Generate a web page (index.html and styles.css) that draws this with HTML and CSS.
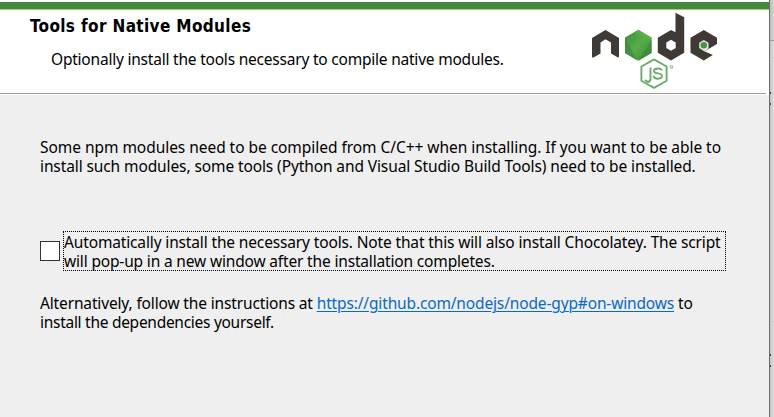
FILE: index.html
```html
<!DOCTYPE html>
<html lang="en">
<head>
<meta charset="utf-8">
<title>Tools for Native Modules</title>
<link rel="stylesheet" href="styles.css">
</head>
<body>
<div class="screen">
  <main class="dialog">
    <header class="header">
      <div class="heading">
        <h1 class="title">Tools for Native Modules</h1>
        <p class="subtitle">Optionally install the tools necessary to compile native modules.</p>
      </div>
      <svg class="logo" viewBox="590 11 130 80" width="130" height="80" aria-label="node js">
        <defs>
          <linearGradient id="leaf" x1="0" y1="0" x2="1" y2="1">
            <stop offset="0" stop-color="#3f8b3c"/><stop offset=".5" stop-color="#57ad49"/><stop offset="1" stop-color="#3f873b"/>
          </linearGradient>
        </defs>
        <g fill="#403a37">
          <path d="M592 38 L605.5 30 L619 38 V56.5 Q619 58 617.5 57.2 L611 53.5 V42.5 L605.5 39.3 L600.5 42.5 V53.5 L593.5 57.5 Q592 58 592 56.5Z"/>
          <path fill-rule="evenodd" d="M675.5 12.8 L684.2 17.3 V52.8 L671 60.5 L657.8 52.8 V37.8 L671 30 L675.5 32.2Z M671 39.8 L666.3 42.5 V48 L671 50.8 L675.7 48 V42.5Z"/>
          <path d="M703.8 30 L717 37.8 V44 L708.5 49 L705 51.5 L712.8 55 L703.8 60.5 L690.5 52.8 V37.8Z"/>
        </g>
        <path d="M703.8 40 L708.5 42.7 V48.5 L705 51.8 L699.2 48 V42.7Z" fill="#dfebde"/>
        <circle cx="703.8" cy="45.2" r="3.2" fill="#479346"/>
        <path d="M638.3 29.8 L651.6 37.5 V53 L638.3 60.8 L625 53 V37.5Z" fill="url(#leaf)"/>
        <path d="M625 37.5 L637 60.2 L625 53Z" fill="#468f42"/>
        <path d="M634 32.3 L638.3 29.8 L651.6 37.5 V41Z" fill="#60b54c" opacity=".6"/>
        <path d="M651.6 40 V53 L638.3 60.8Z" fill="#388439" opacity=".55"/>
        <g fill="none" stroke="#6aac69">
          <path stroke-width="1.9" stroke-linejoin="round" d="M648 83 V81 M650 85.7 L641.4 80.7 V66.5 L654 59.4 L666.6 66.5 V80.7 L654 87.9 L650 85.7"/>
          <path stroke-width="1.9" d="M650.5 67.5 V79 Q650.5 81.3 648.2 82 L644.8 80.2 M662 70.3 Q660.8 68.5 658 68.5 Q654 68.5 654 71 Q654 73 658 73.4 Q662 73.8 662 76.1 Q662 78.7 658 78.7 Q654 78.7 653.4 75.8"/>
          <circle cx="671.5" cy="66.8" r="1.3" stroke-width="1.1" opacity=".7"/>
        </g>
      </svg>
    </header>
    <section class="content">
      <p class="intro"><span class="line l1">Some npm modules need to be compiled from C/C++ when installing. If you want to be able to</span><span class="line l2">install such modules, some tools (Python and Visual Studio Build Tools) need to be installed.</span></p>
      <label class="option">
        <input class="check" type="checkbox">
        <span class="focus"><span class="line l3">Automatically install the necessary tools. Note that this will also install Chocolatey. The script</span><span class="line l4">will pop-up in a new window after the installation completes.</span></span>
      </label>
      <p class="alternative"><span class="line l5">Alternatively, follow the instructions at <a href="#on-windows">https://github.com/nodejs/node-gyp#on-windows</a> to</span><span class="line l6">install the dependencies yourself.</span></p>
    </section>
  </main>
  <aside class="behind">
    <div class="behind-top"></div>
    <div class="behind-mid"></div>
    <div class="behind-low"></div>
    <div class="behind-end"></div>
  </aside>
</div>
</body>
</html>
```
FILE: styles.css
```css
* { box-sizing: border-box; }
body { margin: 0; overflow: hidden; font: 15.5px/19px "Noto Sans", "Liberation Sans", sans-serif; color: #000; }
h1, p { margin: 0; }
.screen { display: flex; width: 774px; height: 417px; background: #fff; }
.dialog { width: 770px; border-right: 1px solid #6c6c6c; background: #efefef; padding-top: 2px; box-shadow: inset 0 2px #fff; }
.header { height: 93px; display: flex; justify-content: space-between; background: linear-gradient(#9b9b9b, #9b9b9b) 0 91px / 766px 1px no-repeat, linear-gradient(#44893d 0 7px, #a5c98b 7px 8px, #fbfde4 8px 9px, #fff 9px); padding: 9px 49px 0 30px; }
.title { font: 700 17px/30px "DejaVu Sans Condensed", "DejaVu Sans", sans-serif; font-stretch: condensed; white-space: nowrap; letter-spacing: .36px; }
.subtitle { padding: 9px 0 0 21px; white-space: nowrap; letter-spacing: -.215px; }
.content { padding: 43px 0 0 40px; }
.line { display: block; white-space: nowrap; }
.l1 { letter-spacing: -.045px; }
.l2 { letter-spacing: -.105px; }
.l3 { letter-spacing: -.145px; }
.l4 { letter-spacing: -.165px; }
.l5 { letter-spacing: -.147px; }
.l6 { letter-spacing: -.28px; }
.option { display: flex; align-items: center; gap: 3px; margin-top: 55px; }
.check { appearance: none; width: 20px; height: 20px; margin: 0; border: 1px solid #333; background: #fff; }
.focus { width: 663px; height: 40px; border: 1px dotted #000; padding-top: 1px; }
.alternative { margin-top: 23px; }
a { color: #0869c7; text-decoration: underline; text-underline-offset: 2px; text-decoration-thickness: 1px; }
.behind { flex: 1; background: linear-gradient(90deg, #c4c4c4, #dedede); }
.behind-top { height: 41px; background: linear-gradient(90deg, #bcbcbc, #d5d5d5); border-bottom: 1px solid #9b9b9b; }
.behind-mid { height: 17px; border-bottom: 1px solid #ccc; }
.behind-low { height: 264px; border-bottom: 1px solid #ccc; background: linear-gradient(#444, #444) 0 34px / 1px 2px no-repeat, linear-gradient(#444, #444) 0 45px / 1px 2px no-repeat; }
.behind-end { height: 95px; background: linear-gradient(#444, #444) 0 32px / 1px 2px no-repeat, linear-gradient(#444, #444) 0 43px / 1px 2px no-repeat; }
```
